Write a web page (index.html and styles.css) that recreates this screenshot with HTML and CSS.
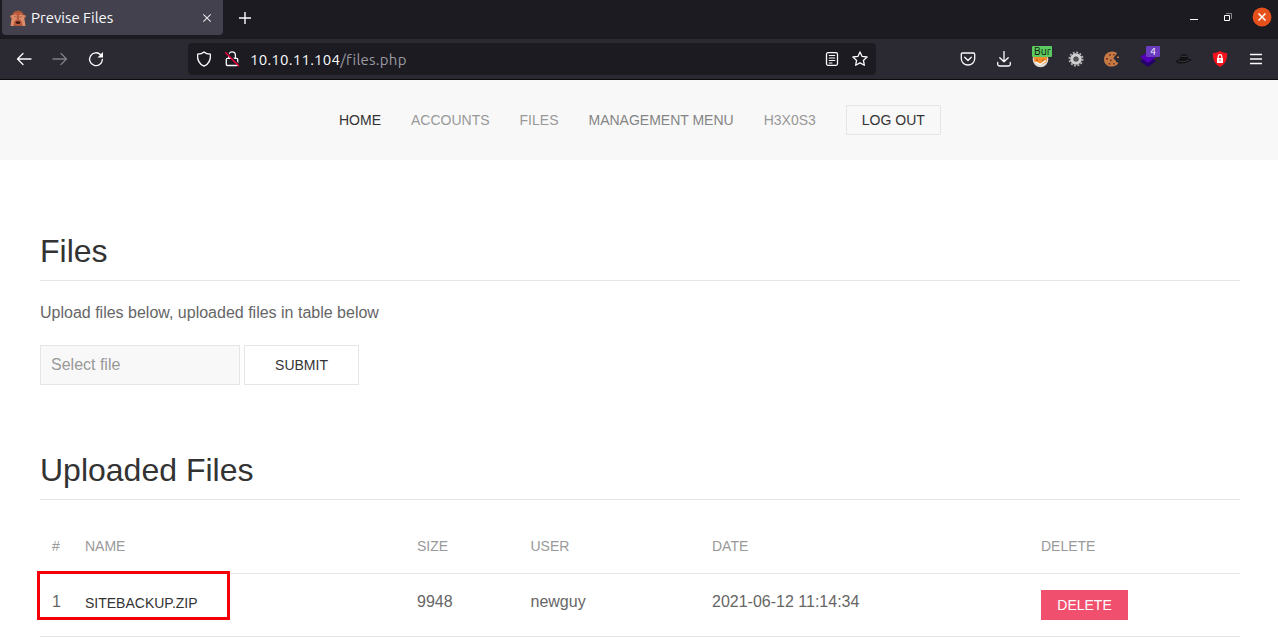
FILE: index.html
```html
<!DOCTYPE html>
<html lang="en">
<head>
<meta charset="utf-8">
<title>Previse Files</title>
<link rel="stylesheet" href="styles.css">
</head>
<body>
<header class="browser">
  <div class="tabbar">
    <div class="tab">
      <svg class="favicon" width="16" height="16" viewBox="0 0 16 16"><path fill="#a9563a" d="M2 6Q3 1 6.500 1L8 0l1.500 1Q13 1 14 6v10H2z"/><path fill="#c2603f" d="M4 3h8l1 3H3z"/><circle cx="2" cy="6.500" r="1.800" fill="#cf7a58"/><circle cx="14" cy="6.500" r="1.800" fill="#cf7a58"/><path fill="#dd8c6b" d="M2.500 5.500L5 4.500l2.300 1v4l-3 2L3.500 16H.5l.8-6zM13.500 5.500L11 4.500l-2.300 1v4l3 2 .8 4.500h3l-.8-6z"/><path fill="#c2603f" d="M5.500 9.500h5l1.500 3.500-2 2H6l-2-2z"/><ellipse cx="8" cy="12.600" rx="2.600" ry="1.300" fill="#3a1512"/><path stroke="#a04f35" d="M8 4v6M4 6.500l3 .8M12 6.500L9 7.300" stroke-width=".7"/></svg>
      <span class="tab-title">Previse Files</span>
      <svg class="tab-close" width="10" height="10" viewBox="0 0 10 10"><path d="M1.300 1.300l7.400 7.400M8.700 1.300L1.300 8.700" stroke="#e6e6ea" stroke-width="1.100"/></svg>
    </div>
    <svg class="new-tab" width="14" height="14" viewBox="0 0 14 14"><path d="M7 1v12M1 7h12" stroke="#fbfbfe" stroke-width="1.400"/></svg>
    <div class="window-controls">
      <svg width="86" height="20" viewBox="0 0 86 20" fill="none"><path d="M4 12.500h8" stroke="#fff"/><path d="M40 6.500h5.500V12" stroke="#88878c"/><path d="M38.500 8.500h5v5h-5z" stroke="#fff"/><circle cx="76" cy="10" r="9.400" fill="#e6511b"/><path d="M72.500 6.500l7 7M79.500 6.500l-7 7" stroke="#fff" stroke-width="1.500"/></svg>
    </div>
  </div>
  <div class="toolbar">
    <div class="tools nav-tools">
      <span class="tool"><svg width="16" height="16" viewBox="0 0 16 16"><path class="line" d="M15 8H2M7 2.500L1.500 8 7 13.500"/></svg></span>
      <span class="tool dim"><svg width="16" height="16" viewBox="0 0 16 16"><path class="line" d="M1 8h13M9 2.500L14.500 8 9 13.500"/></svg></span>
      <span class="tool"><svg width="16" height="16" viewBox="0 0 16 16"><path class="line" d="M12.600 3.700A6.400 6.400 0 1 0 14.400 8.500"/><path fill="#fbfbfe" d="M15 1v5.500H9.500z"/></svg></span>
    </div>
    <div class="urlbar">
      <svg width="16" height="16" viewBox="0 0 16 16"><path class="line" d="M8 .9C6.500 2.300 4.200 3 1.600 3.200 1.100 9.600 3.700 13.300 8 15.200c4.300-1.900 6.900-5.600 6.400-12C11.800 3 9.500 2.300 8 .9z"/></svg>
      <svg width="16" height="16" viewBox="0 0 16 16"><path class="line" d="M4.800 7V4.200a3.300 3.300 0 0 1 6.600 0V7M3.300 7.300h9.400q1 0 1 1v5.200q0 1-1 1H3.300q-1 0-1-1V8.300q0-1 1-1z"/><path d="M2.300 1L16 14.500" stroke="#1c1b22" stroke-width="1.500"/><path d="M1.200 1.300l13.800 14" stroke="#f4003d" stroke-width="1.500"/></svg>
      <span class="url"><b>10.10.11.104</b>/files.php</span>
      <svg width="16" height="16" viewBox="0 0 16 16"><rect class="line" x="2.500" y="1.700" width="11" height="12.600" rx="1.500"/><path class="line thin" d="M5.300 4.500h5.400M5.300 7h5.400M5.300 9.500h5.400M5.300 12h2.700"/></svg>
      <svg width="16" height="16" viewBox="0 0 16 16"><path class="line" d="M8 .9l2.100 4.500 5 .6-3.700 3.400 1 4.900L8 11.900l-4.400 2.400 1-4.900L.9 6l5-.6z"/></svg>
    </div>
    <div class="tools extensions">
      <span class="tool"><svg width="16" height="16" viewBox="0 0 16 16"><path class="line" d="M2.600 2h10.800q1.300 0 1.300 1.300v4.400a6.700 6.300 0 0 1-13.400 0V3.300Q1.300 2 2.600 2zM4.700 6.300L8 9.500l3.300-3.200"/></svg></span>
      <span class="tool"><svg width="16" height="16" viewBox="0 0 16 16"><path class="line" d="M8 .5v10M3.800 6.700L8 10.800l4.200-4.100M1.700 11.500v1.800q0 1.700 1.700 1.700h9.200q1.700 0 1.700-1.700v-1.800"/></svg></span>
      <span class="tool"><svg width="17" height="17" viewBox="0 0 17 17"><circle cx="8.500" cy="8.500" r="7.800" fill="#ddd9d2"/><path fill="#f18b2c" d="M1.500 6h14l-1 5-3 1.500-3 1-3-1.500-3-1z"/><path fill="none" stroke="#fff" stroke-width="1.200" d="M3 11l3 1 2 1.500 6-4"/><path stroke="#8d4c20" stroke-width=".8" d="M4 8.500l2 1m4 0l2-1"/></svg><span class="badge green">Bur</span></span>
      <span class="tool"><svg width="16" height="16" viewBox="0 0 16 16"><circle cx="8" cy="8" r="6.600" fill="none" stroke="#b7b7b7" stroke-width="1.800" stroke-dasharray="1.900 1.560"/><circle cx="8" cy="8" r="4.200" fill="none" stroke="#cfcfcf" stroke-width="3.200"/><circle cx="8" cy="8" r="2.300" fill="#55545a"/></svg></span>
      <span class="tool"><svg width="16" height="16" viewBox="0 0 16 16"><path fill="#c67845" d="M8 .4q3-.2 5 1.600l-1 2-1.500 1.500L9.500 8l2 1 .5 2 2.500.7Q12.500 15.400 8 15.600q-5 .2-7.500-4.200Q-.8 7 1.500 3.500 4 .5 8 .4z"/><path fill="#75391f" d="M5 3h1.700v1.700H5zM2 7h2v1.700H2zM6 8.500h1.700v1.700H6zM4.500 12h1.800v1.500H4.500zM9 3h1.500v1.500H9zM9 12h1.700v1.500H9z"/><path fill="#c67845" d="M13 5.500h2v1.500h-2z"/></svg></span>
      <span class="tool"><svg width="18" height="18" viewBox="0 0 18 18"><path fill="#25006c" d="M1 11l8-5 8 5-8 6z"/><path fill="#5100b5" d="M1 7l8-5 8 5-8 6z"/></svg><span class="badge purple">4</span></span>
      <span class="tool"><svg width="16" height="16" viewBox="0 0 16 16"><path fill="#121114" d="M4 4q4-1.500 8 0l.5 4H15q1 1-1 2-5 3-11 2.500-4-1-2.500-3Q2 8 4 8z"/><path fill="none" stroke="#47464d" stroke-width=".7" d="M4 5q4 1 8 0M2 10q6 2 11-1"/></svg></span>
      <span class="tool"><svg width="16" height="16" viewBox="0 0 16 16"><path fill="#f3131b" d="M8 0q3 2 7.200 2.200Q15.500 12 8 16 .5 12 .8 2.200 5 2 8 0z"/><path fill="#fff" d="M5 7h6v5H5z"/><path fill="none" stroke="#fff" stroke-width="1.200" d="M6.200 7V5.500a1.800 1.800 0 0 1 3.600 0V7"/><path fill="#e64a4d" d="M7.500 8.300h1v2h-1z"/></svg></span>
      <span class="tool"><svg width="16" height="16" viewBox="0 0 16 16"><path d="M2 3.500h12M2 8h12M2 12.500h12" stroke="#fbfbfe" stroke-width="1.300"/></svg></span>
    </div>
  </div>
</header>
<nav class="site-nav">
  <a class="current">HOME</a><a>ACCOUNTS</a><a>FILES</a><a class="menu">MANAGEMENT MENU</a><a>H3X0S3</a>
  <button class="logout">LOG OUT</button>
</nav>
<main class="content">
  <section class="upload">
    <h1>Files</h1>
    <p>Upload files below, uploaded files in table below</p>
    <div class="form"><div class="file-field">Select file</div><button class="submit">SUBMIT</button></div>
  </section>
  <section class="uploaded">
    <h1>Uploaded Files</h1>
    <table>
      <colgroup><col class="c-num"><col class="c-name"><col class="c-size"><col class="c-user"><col class="c-date"><col></colgroup>
      <thead><tr><th>#</th><th>NAME</th><th>SIZE</th><th>USER</th><th>DATE</th><th>DELETE</th></tr></thead>
      <tbody><tr><td>1</td><td class="name"><a class="file">SITEBACKUP.ZIP</a></td><td>9948</td><td>newguy</td><td>2021-06-12 11:14:34</td><td><button class="delete">DELETE</button></td></tr></tbody>
    </table>
    <div class="highlight"></div>
  </section>
</main>
</body>
</html>
```
FILE: styles.css
```css
* { box-sizing: border-box; }
body { margin: 0; height: 643px; overflow: hidden; background: #fff; color: #666; font: 16px/24px "Liberation Sans", Arial, sans-serif; }
svg { display: block; flex: none; }
button { font-family: inherit; font-size: 14px; padding: 0; border-radius: 0; }

.browser { height: 80px; background: #2b2a33; border-bottom: 1px solid #0c0c0d; font-family: Ubuntu, "Noto Sans", sans-serif; color: #fbfbfe; }
.tabbar { display: flex; align-items: flex-start; height: 39px; padding-left: 2px; background: #1c1b22; }
.tab { display: flex; align-items: center; width: 221px; height: 35px; padding: 0 11px 0 8px; background: #42414d; border-radius: 0 0 4px 4px; }
.tab-title { margin-left: 5px; font-size: 15px; }
.tab-close { margin-left: auto; }
.new-tab { margin: 11px 0 0 15px; }
.window-controls { margin: 7px 6px 0 auto; }
.toolbar { display: flex; align-items: center; height: 40px; padding: 0 4px 0 6px; }
.tools { display: flex; }
.tool { position: relative; display: flex; justify-content: center; align-items: center; width: 36px; height: 32px; }
.dim { opacity: .4; }
.line { fill: none; stroke: #fbfbfe; stroke-width: 1.3; stroke-linejoin: round; stroke-linecap: round; }
.thin { stroke-width: 1.1; }
.urlbar { display: flex; align-items: center; gap: 12px; width: 688px; height: 32px; margin-left: 74px; padding: 0 8px; background: #1c1b22; border-radius: 4px; }
.url { flex: 1; margin-left: -2px; padding-top: 2px; color: #9b9aa0; font-size: 15px; letter-spacing: 0.25px; }
.url b { font-weight: 400; color: #fbfbfe; }
.extensions { margin-left: auto; }
.badge { position: absolute; text-align: center; border-radius: 1px; overflow: hidden; }
.green { left: 10px; top: 3px; width: 20px; height: 11px; padding-left: 2px; background: #5ccb5f; color: #111; font-size: 10.5px; line-height: 11px; text-align: left; }
.purple { left: 16px; top: 3px; width: 14px; height: 11px; background: #6a3dc0; color: #fff; font-size: 10px; line-height: 11px; }

.site-nav { display: flex; align-items: center; gap: 30px; height: 80px; padding-left: 339px; background: #f8f8f8; font-size: 14px; color: #999; }
.current { color: #333; }
.menu { color: #858585; }
.logout { width: 95px; height: 30px; background: transparent; border: 1px solid #e5e5e5; color: #333; }

.content { padding: 70px 38px 0 40px; }
h1 { height: 51px; margin: 0; border-bottom: 1px solid #e5e5e5; color: #333; font-size: 32px; font-weight: 400; line-height: 42px; }
.upload { height: 219px; }
p { margin: 20px 0; }
.form { display: flex; gap: 4px; }
.file-field { width: 200px; height: 40px; padding: 0 10px; background: #f8f8f8; border: 1px solid #e5e5e5; color: #999; line-height: 38px; }
.submit { width: 115px; height: 40px; background: #fff; border: 1px solid #e5e5e5; color: #333; }

.uploaded { position: relative; }
table { width: 1200px; margin-top: 18px; table-layout: fixed; border-collapse: collapse; }
th, td { padding: 0 12px; text-align: left; vertical-align: middle; }
th { height: 55px; padding-top: 2px; color: #999; font-size: 14px; font-weight: 400; }
tbody tr { height: 63px; border-top: 1px solid #e5e5e5; border-bottom: 1px solid #e5e5e5; }
td { padding-bottom: 6px; }
td.name { padding-bottom: 4px; }
.c-num { width: 33px; }
.c-name { width: 332px; }
.c-size { width: 113.5px; }
.c-user { width: 181.5px; }
.c-date { width: 329px; }
.file { color: #333; font-size: 14px; }
.delete { display: block; width: 87px; height: 30px; background: #f0506e; border: 0; color: #fff; }
td:last-child { padding-bottom: 0; }
.highlight { position: absolute; left: -3px; top: 122px; width: 193px; height: 49px; border: 3px solid #f40008; }
```
